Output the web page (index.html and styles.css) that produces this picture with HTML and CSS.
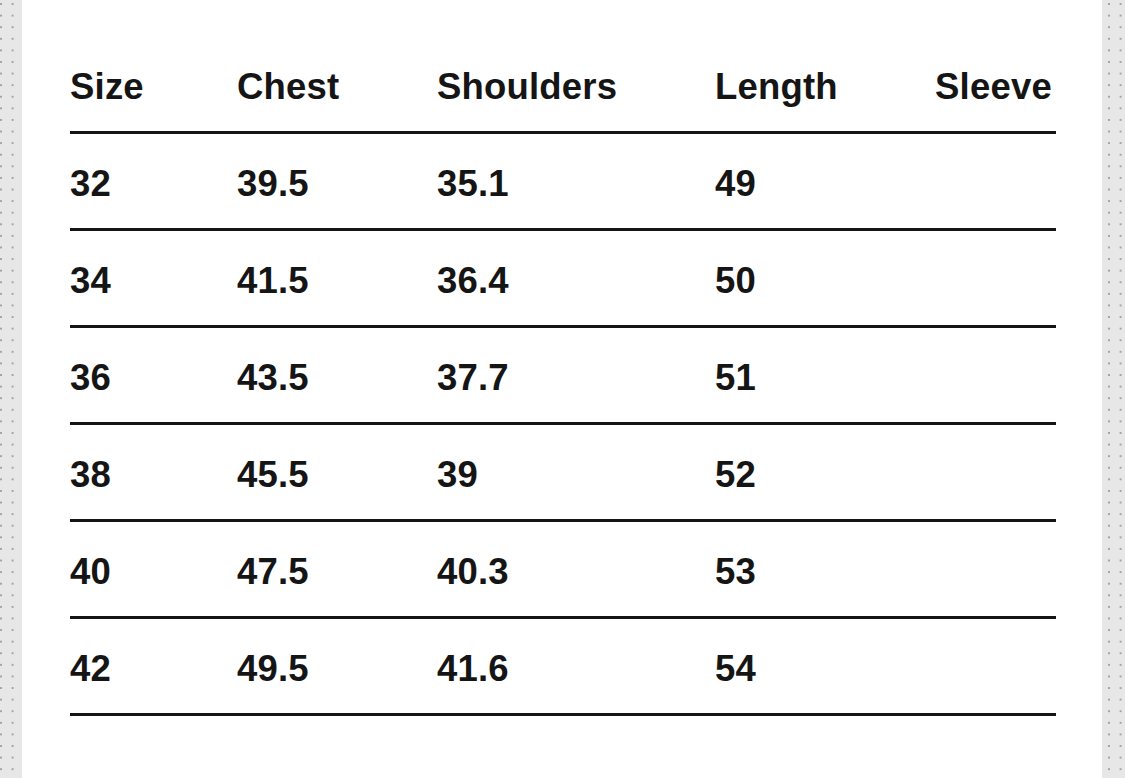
FILE: index.html
```html
<!DOCTYPE html>
<html lang="en">
<head>
<meta charset="utf-8">
<title>Size chart</title>
<link rel="stylesheet" href="styles.css">
</head>
<body>
<div class="page">
  <div class="strip strip-left"></div>
  <main class="card">
    <div class="chart">
      <div class="row head">
        <div class="cell">Size</div>
        <div class="cell">Chest</div>
        <div class="cell">Shoulders</div>
        <div class="cell">Length</div>
        <div class="cell">Sleeve</div>
      </div>
      <div class="row">
        <div class="cell">32</div><div class="cell">39.5</div><div class="cell">35.1</div><div class="cell">49</div><div class="cell"></div>
      </div>
      <div class="row">
        <div class="cell">34</div><div class="cell">41.5</div><div class="cell">36.4</div><div class="cell">50</div><div class="cell"></div>
      </div>
      <div class="row">
        <div class="cell">36</div><div class="cell">43.5</div><div class="cell">37.7</div><div class="cell">51</div><div class="cell"></div>
      </div>
      <div class="row">
        <div class="cell">38</div><div class="cell">45.5</div><div class="cell">39</div><div class="cell">52</div><div class="cell"></div>
      </div>
      <div class="row">
        <div class="cell">40</div><div class="cell">47.5</div><div class="cell">40.3</div><div class="cell">53</div><div class="cell"></div>
      </div>
      <div class="row">
        <div class="cell">42</div><div class="cell">49.5</div><div class="cell">41.6</div><div class="cell">54</div><div class="cell"></div>
      </div>
    </div>
  </main>
  <div class="strip strip-right"></div>
</div>
</body>
</html>
```

FILE: styles.css
```css
html, body {
  margin: 0;
  padding: 0;
  height: 100%;
  background: #ffffff;
}

.page {
  display: flex;
  height: 778px;
  overflow: hidden;
}

.strip {
  background-color: #e7e7e7;
  background-image: radial-gradient(circle, #a3a3a3 0 1.1px, transparent 1.5px);
  background-size: 11.6px 11.6px;
}

.strip-left {
  width: 22px;
  flex: 0 0 22px;
  background-position: -4.8px -1.8px;
}

.strip-right {
  flex: 1 1 auto;
  background-position: 1.2px -1.8px;
}

.card {
  flex: 0 0 1080px;
  background: #ffffff;
  padding-left: 48px;
  box-sizing: border-box;
}

.chart {
  width: 986px;
  font-family: "Liberation Sans", Arial, sans-serif;
  font-weight: 700;
  font-size: 36.5px;
  color: #151515;
  letter-spacing: 0.2px;
}

.row {
  display: grid;
  grid-template-columns: 167px 200px 278px 220px 1fr;
  border-bottom: 3px solid #151515;
  height: 97px;
  padding-top: 32px;
  box-sizing: border-box;
  line-height: 36px;
}

.row.head {
  height: 134px;
  padding-top: 69px;
}

.row .cell {
  height: 36px;
  white-space: nowrap;
}
```
